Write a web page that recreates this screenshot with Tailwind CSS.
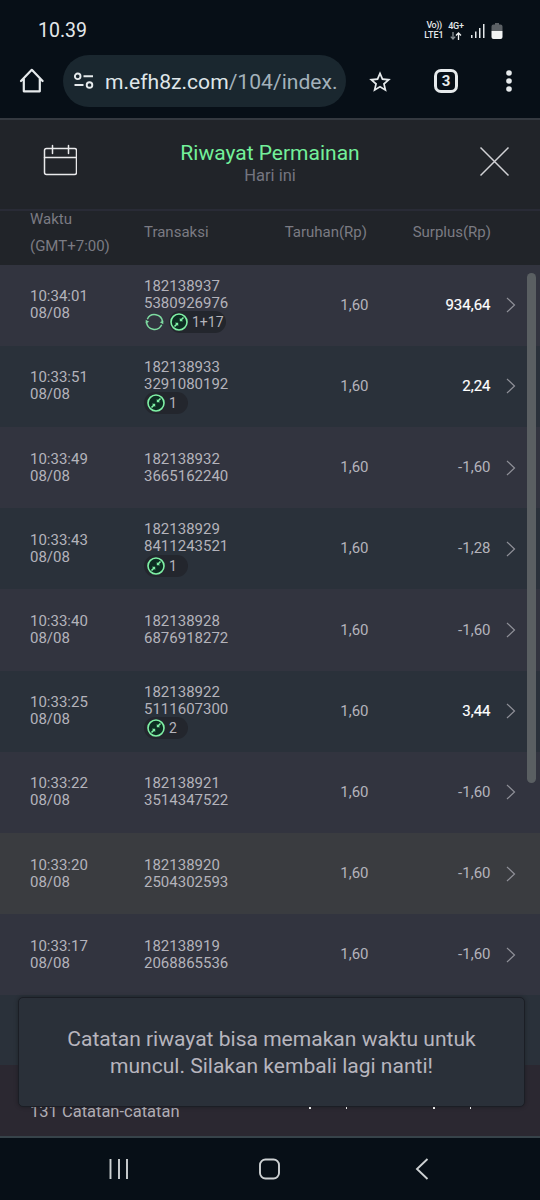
<!DOCTYPE html>
<html lang="id">
<head>
    <meta charset="UTF-8" />
    <meta name="viewport" content="width=device-width, initial-scale=1.0">
    <title>Riwayat Permainan</title>
    <script src="https://cdn.jsdelivr.net/npm/@tailwindcss/browser@4"></script>
</head>
<body class="bg-[#070f17] font-['Roboto',sans-serif]">
<div class="relative flex flex-col w-[540px] h-[1200px] overflow-hidden">

    <!-- Status bar -->
    <div class="flex items-center justify-between h-[54px] pl-[38px] pr-9 pt-[7px] shrink-0">
        <span class="text-[19.500px] leading-6 text-[#e4e8ea]">10.39</span>
        <div class="flex items-center text-[#e4e8ea] font-medium">
            <div class="flex flex-col gap-px text-[9px] leading-[9px] text-center w-5"><div class="tracking-tighter">Vo))</div><div>LTE1</div></div>
            <div class="text-[9px] leading-[9px] text-center w-5 ml-[2px]">
                <div class="tracking-tight">4G+</div>
                <svg class="mx-auto mt-px" width="12" height="8" viewBox="0 0 12 8" fill="none" stroke-width="1.3">
                    <path d="M3 0v7M0.8 4.600L3 7l2.200-2.400" stroke="#8a9196" />
                    <path d="M8.500 8V1M6 3.500L8.500 1L11 3.500" stroke="#eef0f1" />
                </svg>
            </div>
            <svg class="ml-[4px]" width="15" height="16" viewBox="0 0 15 16" fill="#e4e8ea">
                <path d="M1 12h1.500v3H1zM5 8.500h1.500V15H5zM9 5h1.500v10H9zM13 1h1.500v14H13z" />
            </svg>
            <svg class="ml-[6px] mr-px" width="12" height="18" viewBox="0 0 12 18">
                <path d="M4 1h4v1.500h1.500a2 2 0 0 1 2 2V9H.5V4.500a2 2 0 0 1 2-2H4z" fill="#5b6065" />
                <path d="M.5 9h11v6a2 2 0 0 1-2 2h-7a2 2 0 0 1-2-2z" fill="#f1f3f4" />
            </svg>
        </div>
    </div>

    <!-- Browser toolbar -->
    <div class="flex items-center h-[64px] pb-[10px] shrink-0 text-[#e6eaec]">
        <svg class="ml-[18px]" width="28" height="28" viewBox="0 0 28 28" fill="none" stroke="currentColor" stroke-width="2.200" stroke-linejoin="round" stroke-linecap="round">
            <path d="M3 14L13.800 2.800L24.600 14M5.800 12v12.300h16V12" />
        </svg>
        <div class="flex items-center w-[283px] h-[52px] ml-[17px] pl-[11px] rounded-full bg-[#1a272f]">
            <svg class="shrink-0" width="20" height="18" viewBox="0 0 20 18" fill="none" stroke="currentColor" stroke-width="1.900">
                <circle cx="3.700" cy="4.300" r="2.800" /><path d="M9.500 4.300H19M.5 13H9.500" /><circle cx="15.500" cy="13" r="2.800" />
            </svg>
            <span class="ml-[11px] mt-[2px] text-[21.100px] leading-7 whitespace-nowrap text-[#dfe6e9]">m.efh8z.com<span class="text-[#a3b1ba]">/104/index.</span></span>
        </div>
        <svg class="ml-[21px] mt-px" width="26" height="26" viewBox="0 0 24 24" fill="currentColor">
            <path d="M22 9.240l-7.190-.62L12 2 9.190 8.630 2 9.240l5.460 4.730L5.820 21 12 17.270 18.180 21l-1.630-7.030L22 9.240zM12 15.400l-3.760 2.270 1-4.280-3.320-2.880 4.380-.38L12 6.100l1.710 4.040 4.380.38-3.320 2.880 1 4.280L12 15.400z" />
        </svg>
        <div class="flex items-center justify-center w-6 h-6 ml-[41px] rounded-[7px] border-3 border-[#e6eaec] text-[15px] leading-none font-bold">3</div>
        <svg class="ml-[47px]" width="8" height="24" viewBox="0 0 8 24" fill="currentColor">
            <circle cx="4" cy="4" r="2.800" /><circle cx="4" cy="12" r="2.800" /><circle cx="4" cy="20" r="2.800" />
        </svg>
    </div>

    <!-- Page header -->
    <header class="grid grid-cols-[77px_1fr_77px] h-[91px] border-t-2 border-[#343940] bg-[#212429] shrink-0">
        <svg class="ml-[43px] mt-[24px]" width="34" height="34" viewBox="0 0 34 34" fill="none" stroke="#e9e9eb" stroke-width="1.500" stroke-linecap="round">
            <rect x="1.500" y="4.500" width="32" height="26" rx="2" /><path d="M1.500 13.500h32M9.500 1.500v8M25.500 1.500v8" />
        </svg>
        <div class="text-center pt-[21px]">
            <h1 class="text-[21px] leading-6 text-[#73f09a]">Riwayat Permainan</h1>
            <p class="text-[16.500px] leading-[21px] text-[#747580]">Hari ini</p>
        </div>
        <svg class="ml-[16px] mt-[26px]" width="31" height="31" viewBox="0 0 31 31" stroke="#d2d2d6" stroke-width="1.500">
            <path d="M1.500 1.500L29.500 29.500M29.500 1.500L1.500 29.500" />
        </svg>
    </header>

    <!-- Column titles -->
    <div class="grid grid-cols-[114px_100px_123px_124px] items-center h-[55.700px] border-t-2 border-[#292b36] bg-[#212429] pl-[30px] text-[15px] text-[#7b7b83] shrink-0">
        <div class="leading-[27px] -mt-[9px]">Waktu<br>(GMT+7:00)</div>
        <div class="-mt-[11px]">Transaksi</div>
        <div class="-mt-[11px] text-right">Taruhan(Rp)</div>
        <div class="-mt-[11px] text-right">Surplus(Rp)</div>
    </div>

    <!-- Transactions -->
    <main id="rows" class="h-[800.300px] overflow-hidden shrink-0"></main>

    <!-- Totals -->
    <div class="relative h-[73px] bg-[#2b2831] border-b-2 border-[#37434a] pl-[30px] pt-[38px] text-[16.500px] leading-[18px] text-[#b1aeb6] shrink-0">
        131 Catatan-catatan
        <div class="absolute left-[309px] top-[42px] w-[2px] h-[2px] bg-white"></div>
        <div class="absolute left-[346px] top-[42px] w-px h-[2px] bg-white"></div>
        <div class="absolute left-[433px] top-[42px] w-[2px] h-[2px] bg-white"></div>
        <div class="absolute left-[470px] top-[42px] w-px h-[2px] bg-white"></div>
    </div>

    <!-- Navigation bar -->
    <nav class="flex items-center h-[62px] pl-[108px] text-[#cdd1d3] shrink-0">
        <svg width="20" height="22" viewBox="0 0 20 22" stroke="currentColor" stroke-width="1.900"><path d="M2.500 1v20M11 1v20M19 1v20" /></svg>
        <svg class="ml-[131px]" width="22" height="22" viewBox="0 0 22 22" fill="none" stroke="currentColor" stroke-width="1.900"><rect x="1" y="1.500" width="19" height="19" rx="5.500" /></svg>
        <svg class="ml-[134px]" width="14" height="22" viewBox="0 0 14 22" fill="none" stroke="currentColor" stroke-width="1.900"><path d="M12.500 1L2 11L12.500 21" /></svg>
    </nav>

    <!-- Scrollbar -->
    <div class="absolute left-[527px] top-[273px] w-[9px] h-[510px] rounded-full bg-[#5a5f62]"></div>

    <!-- Toast -->
    <div class="absolute left-[18px] top-[997px] w-[507px] h-[110px] rounded-[5px] border border-[#1b1e25] bg-[#2a3039] shadow-[0_0_4px_rgba(0,0,0,0.3)] pt-[27px] text-center text-[21.050px] leading-[27px] text-[#b7b5be]">
        Catatan riwayat bisa memakan waktu untuk<br>muncul. Silakan kembali lagi nanti!
    </div>
</div>

<script>
    const rows = [
        { time: '10:34:01', id: ['182138937', '5380926976'], win: '934,64', badge: '1+17', spin: true },
        { time: '10:33:51', id: ['182138933', '3291080192'], win: '2,24', badge: '1' },
        { time: '10:33:49', id: ['182138932', '3665162240'], win: '-1,60' },
        { time: '10:33:43', id: ['182138929', '8411243521'], win: '-1,28', badge: '1' },
        { time: '10:33:40', id: ['182138928', '6876918272'], win: '-1,60' },
        { time: '10:33:25', id: ['182138922', '5111607300'], win: '3,44', badge: '2' },
        { time: '10:33:22', id: ['182138921', '3514347522'], win: '-1,60' },
        { time: '10:33:20', id: ['182138920', '2504302593'], win: '-1,60', active: true },
        { time: '10:33:17', id: ['182138919', '2068865536'], win: '-1,60' },
    ];

    const spinIcon = `<svg class="mr-[4px] shrink-0" width="21" height="20" viewBox="0 0 21 20" fill="none" stroke="#7edba1" stroke-width="1.500">
        <path d="M3.300 7.200A8 8 0 0 1 18.500 10M17.700 12.800A8 8 0 0 1 2.500 10" />
        <path d="M19.300 8.500V12.300L15.800 10.300zM1.700 11.500V7.700L5.200 9.700z" fill="#7edba1" stroke="none" /></svg>`;

    const collapseIcon = `<svg class="shrink-0" width="20" height="20" viewBox="0 0 20 20" fill="none" stroke="#7ff0a5" stroke-width="1.600">
        <circle cx="10" cy="10" r="8" fill="#0d2d22" />
        <path d="M14.500 5.500L12 8M5.500 14.500L8 12" />
        <path d="M10.800 5.900v3.300h3.300zM9.200 14.100v-3.300H5.900z" fill="#7ff0a5" stroke="none" /></svg>`;

    function badge(row) {
        if (!row.badge) return '';
        return `<div class="flex items-center h-[21px]">${row.spin ? spinIcon : ''}
            <div class="flex items-center h-[22px] ${row.spin ? 'w-[57px]' : 'w-[44px] pl-[2px]'} rounded-full bg-[#23262d]">
                ${collapseIcon}<span class="ml-[3px] text-[14px] leading-none">${row.badge}</span>
            </div></div>`;
    }

    document.getElementById('rows').innerHTML = rows.map((row, i) => `
        <div class="grid grid-cols-[114px_100px_124.500px_122px_30px] items-center h-[81.200px] pl-[30px] text-[15px] leading-[17px] text-[#b4b3bb] ${row.active ? 'bg-[#3a3c40]' : i % 2 ? 'bg-[#2a313a]' : 'bg-[#32343f]'}">
            <div>${row.time}<br>08/08</div>
            <div>${row.id[0]}<br>${row.id[1]}${badge(row)}</div>
            <div class="text-right">1,60</div>
            <div class="text-right ${row.win.startsWith('-') ? '' : 'text-white [-webkit-text-stroke:0.15px_white]'}">${row.win}</div>
            <svg class="ml-[15.500px]" width="10" height="16" viewBox="0 0 10 16" fill="none" stroke="#8f9098" stroke-width="1.200"><path d="M1 1L8.500 8L1 15" /></svg>
        </div>`).join('') + '<div class="h-[70px] bg-[#2a313a]"></div>';
</script>
</body>
</html>
